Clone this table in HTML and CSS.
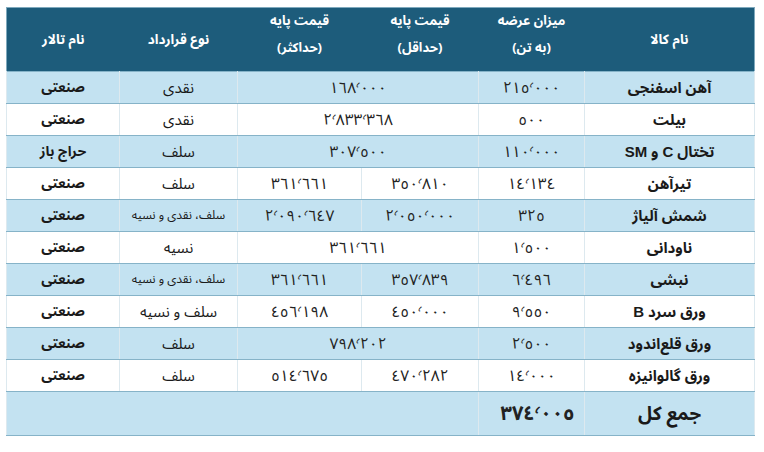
FILE: index.html
```html
<!DOCTYPE html>
<html lang="fa" dir="rtl">
<head>
<meta charset="utf-8">
<title>جدول عرضه</title>
<link rel="stylesheet" href="styles.css">
</head>
<body>
<div class="wrap">
<table class="grid">
<colgroup>
<col class="c-name"><col class="c-qty"><col class="c-min"><col class="c-max"><col class="c-type"><col class="c-hall">
</colgroup>
<thead>
<tr class="head">
<th>نام کالا</th>
<th class="two"><span class="ln">میزان عرضه</span><span class="ln">(به تن)</span></th>
<th class="two"><span class="ln">قیمت پایه</span><span class="ln">(حداقل)</span></th>
<th class="two"><span class="ln">قیمت پایه</span><span class="ln">(حداکثر)</span></th>
<th>نوع قرارداد</th>
<th>نام تالار</th>
</tr>
</thead>
<tbody>
<tr class="blue"><td class="name">آهن اسفنجی</td><td class="num">٢١٥٬٠٠٠</td><td class="num" colspan="2">١٦٨٬٠٠٠</td><td class="type">نقدی</td><td class="hall">صنعتی</td></tr>
<tr><td class="name">بیلت</td><td class="num">٥٠٠</td><td class="num" colspan="2">٢٬٨٣٣٬٣٦٨</td><td class="type">نقدی</td><td class="hall">صنعتی</td></tr>
<tr class="blue"><td class="name">تختال <b class="lat">C</b> و <b class="lat">SM</b></td><td class="num">١١٠٬٠٠٠</td><td class="num" colspan="2">٣٠٧٬٥٠٠</td><td class="type">سلف</td><td class="hall">حراج باز</td></tr>
<tr><td class="name">تیرآهن</td><td class="num">١٤٬١٣٤</td><td class="num">٣٥٠٬٨١٠</td><td class="num">٣٦١٬٦٦١</td><td class="type">سلف</td><td class="hall">صنعتی</td></tr>
<tr class="blue"><td class="name">شمش آلیاژ</td><td class="num">٣٢٥</td><td class="num">٢٬٠٥٠٬٠٠٠</td><td class="num">٢٬٠٩٠٬٦٤٧</td><td class="type small">سلف، نقدی و نسیه</td><td class="hall">صنعتی</td></tr>
<tr><td class="name">ناودانی</td><td class="num">١٬٥٠٠</td><td class="num" colspan="2">٣٦١٬٦٦١</td><td class="type">نسیه</td><td class="hall">صنعتی</td></tr>
<tr class="blue"><td class="name">نبشی</td><td class="num">٦٬٤٩٦</td><td class="num">٣٥٧٬٨٣٩</td><td class="num">٣٦١٬٦٦١</td><td class="type small">سلف، نقدی و نسیه</td><td class="hall">صنعتی</td></tr>
<tr><td class="name">ورق سرد <b class="lat">B</b></td><td class="num">٩٬٥٥٠</td><td class="num">٤٥٠٬٠٠٠</td><td class="num">٤٥٦٬١٩٨</td><td class="type">سلف و نسیه</td><td class="hall">صنعتی</td></tr>
<tr class="blue"><td class="name">ورق قلع‌اندود</td><td class="num">٢٬٥٠٠</td><td class="num" colspan="2">٧٩٨٬٢٠٢</td><td class="type">سلف</td><td class="hall">صنعتی</td></tr>
<tr><td class="name">ورق گالوانیزه</td><td class="num">١٤٬٠٠٠</td><td class="num">٤٧٠٬٢٨٢</td><td class="num">٥١٤٬٦٧٥</td><td class="type">سلف</td><td class="hall">صنعتی</td></tr>
<tr class="blue total"><td class="name">جمع کل</td><td class="num">٣٧٤٬٠٠٥</td><td colspan="4"></td></tr>
</tbody>
</table>
</div>
</body>
</html>
```

FILE: styles.css
```css
html, body {
  margin: 0;
  padding: 0;
  background: #ffffff;
}
.wrap {
  padding: 7px 9px 0 7px;
}
.grid {
  direction: rtl;
  width: 748px;
  table-layout: fixed;
  border-collapse: collapse;
  font-family: "Noto Sans Arabic", "DejaVu Sans", sans-serif;
  color: #1a1a1a;
  border: 1px solid #7fa9bd;
}
.c-name { width: 170px; }
.c-qty { width: 106px; }
.c-min { width: 117px; }
.c-max { width: 124px; }
.c-type { width: 118px; }
.c-hall { width: 113px; }

.head th {
  box-sizing: border-box;
  background: #1d5c7b;
  color: #ffffff;
  height: 64px;
  font-size: 13.5px;
  font-weight: bold;
  line-height: 20px;
  text-align: center;
  padding: 0;
  border: 0;
  vertical-align: middle;
}
.head th.two {
  vertical-align: top;
  padding-top: 0;
}
.ln {
  display: block;
  font-size: 13px;
  line-height: 27px;
}
tbody tr {
  height: 32px;
  background: #ffffff;
}
tbody tr.blue {
  background: #c3e2f1;
}
tbody td {
  text-align: center;
  padding: 0;
  line-height: 20px;
  border-top: 1px solid #86b3c8;
  border-bottom: 1px solid #86b3c8;
  border-left: 1px solid #dde9ef;
  border-right: 1px solid #dde9ef;
  font-size: 14px;
}
.name {
  font-weight: bold;
  font-size: 15px;
}
.lat {
  font-family: "Liberation Sans", sans-serif;
  font-weight: bold;
  font-size: 15px;
}
.num {
  font-size: 15.5px;
  letter-spacing: 4.5px;
  color: #222;
}
.type {
  font-size: 15px;
}
.type.small {
  font-size: 12px;
}
.hall {
  font-weight: bold;
  font-size: 14px;
}
tbody tr.total {
  height: 44px;
}
.total .name {
  font-size: 19px;
}
.total .num {
  font-size: 20px;
  font-weight: bold;
  letter-spacing: 2.5px;
  padding-left: 12px;
}
```
